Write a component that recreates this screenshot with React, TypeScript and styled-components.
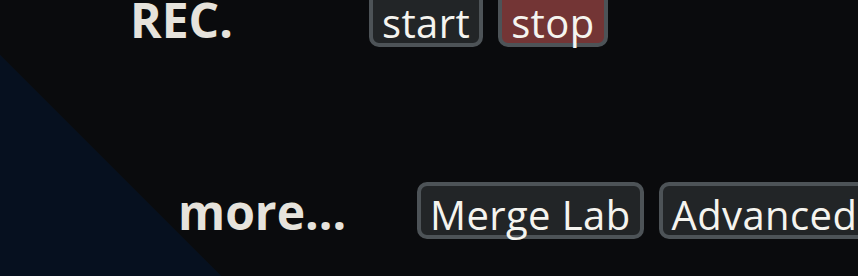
import React from 'react'
import styled, { createGlobalStyle } from 'styled-components'

const GlobalStyle = createGlobalStyle`
  html, body {
    margin: 0;
    padding: 0;
    background: #0a0b0d;
  }
  body {
    font-family: 'Open Sans', 'Liberation Sans', sans-serif;
  }
`

const Page = styled.div`
  height: 100vh;
  overflow: hidden;
  padding-left: 130px;
  box-sizing: border-box;
  background: linear-gradient(45deg, #06101f 156px, #0a0b0d 157px);
`

const Section = styled.div<{ indent?: number }>`
  display: flex;
  align-items: baseline;
  margin-left: ${({ indent }) => indent ?? 0}px;
  &:first-child {
    margin-top: -10px;
  }
  & + & {
    margin-top: 135px;
  }
`

const Label = styled.h2`
  flex: 0 0 239px;
  margin: 0;
  font-size: 48px;
  line-height: 46px;
  font-weight: 700;
  color: #e6e3dc;
`

const ButtonRow = styled.div`
  display: flex;
  gap: 15px;
  flex-wrap: nowrap;
`

const Button = styled.button<{ danger?: boolean }>`
  flex-shrink: 0;
  height: 57px;
  box-sizing: border-box;
  padding: 0 9px;
  border: 4px solid #4d5357;
  border-radius: 10px;
  background: ${({ danger }) => (danger ? '#733535' : '#222527')};
  color: #f5f4ef;
  font-family: 'Open Sans', 'Liberation Sans', sans-serif;
  font-size: 40px;
  line-height: 57px;
  letter-spacing: 0.4px;
  overflow: visible;
  white-space: nowrap;
  cursor: pointer;
`

const App: React.FC = () => {
  return (
    <Page>
      <GlobalStyle />
      <Section>
        <Label>REC.</Label>
        <ButtonRow>
          <Button>start</Button>
          <Button danger>stop</Button>
        </ButtonRow>
      </Section>
      <Section indent={48}>
        <Label>more...</Label>
        <ButtonRow>
          <Button>Merge Lab</Button>
          <Button>Advanced</Button>
        </ButtonRow>
      </Section>
    </Page>
  )
}

export default App
